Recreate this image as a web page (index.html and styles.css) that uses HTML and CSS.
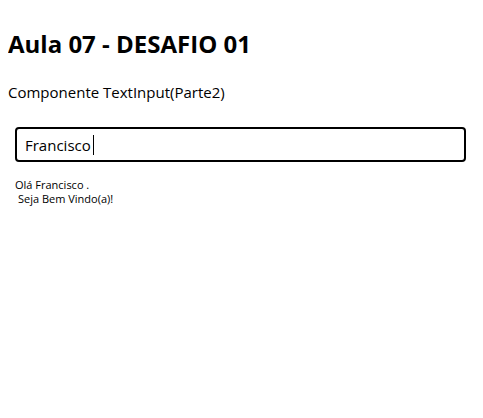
FILE: index.html
```html
<!DOCTYPE html>
<html lang="pt-BR">
<head>
<meta charset="utf-8">
<title>Aula 07 - DESAFIO 01</title>
<link rel="stylesheet" href="styles.css">
</head>
<body>
<h1 class="title">Aula 07 - DESAFIO 01</h1>
<p class="subtitle">Componente TextInput(Parte2)</p>
<div class="field">
  <div class="input"><span class="value">Francisco</span><span class="caret"></span></div>
</div>
<div class="greeting">
  <div>Olá Francisco .</div>
  <div class="second">Seja Bem Vindo(a)!</div>
</div>
</body>
</html>
```
FILE: styles.css
```css
body {
  margin: 8px;
  font-family: "Open Sans", "Noto Sans", sans-serif;
  color: #000;
  background: #fff;
}
.title {
  font-size: 24px;
  font-weight: 700;
  margin: 20px 0 0 0;
  line-height: 32px;
}
.subtitle {
  font-size: 15px;
  margin: 21px 0 0 0;
  line-height: 22px;
}
.field {
  padding: 0 9px 0 7px;
  margin-top: 24px;
}
.input {
  height: 35px;
  box-sizing: border-box;
  border: 2px solid #000;
  border-radius: 4px;
  display: flex;
  align-items: center;
  padding-left: 8px;
  font-size: 15px;
}
.caret {
  display: inline-block;
  width: 1px;
  height: 20px;
  background: #000;
  margin-left: 2px;
}
.greeting {
  font-size: 11px;
  line-height: 14px;
  margin: 16px 0 0 7px;
}
.second {
  padding-left: 3px;
}
```
